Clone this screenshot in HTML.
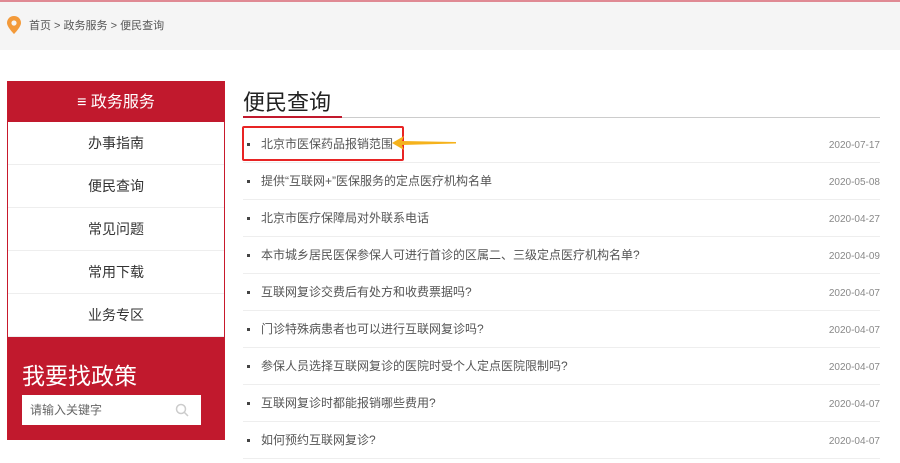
<!DOCTYPE html>
<html><head><meta charset="utf-8"><style>
*{margin:0;padding:0;box-sizing:border-box}
body{width:900px;height:463px;overflow:hidden;background:#fff;font-family:"Liberation Sans","Noto Sans CJK SC",sans-serif;position:relative}
.top{position:absolute;left:0;top:0;width:900px;height:50px;background:#f5f5f5;border-top:2px solid #e08a94}
.crumb{position:absolute;left:29px;top:15px;font-size:11px;color:#555}
.pin{position:absolute;left:7px;top:14px}
.side{position:absolute;left:7px;top:81px;width:218px;height:359px;border:1px solid #c8192c;border-top:none}
.sh{height:41px;background:#c1192d;color:#fff;font-size:16px;text-align:center;line-height:43px}
.mi{height:43px;border-bottom:1px solid #eee;text-align:center;line-height:43px;font-size:14px;color:#333}
.mi:last-of-type{border-bottom:none}
.pol{position:absolute;left:0;top:256px;width:216px;height:103px;background:#c1192d}
.pol h3{position:absolute;left:14px;top:20px;color:#fff;font-size:23px;font-weight:normal}
.pol .in{position:absolute;left:14px;top:58px;width:179px;height:30px;background:#fff;font-size:12px;color:#666;line-height:30px;padding-left:8px}
.title{position:absolute;left:243px;top:85px;font-size:22px;color:#222}
.ul{position:absolute;left:243px;top:117px;width:637px;height:1px;background:#ccc}
.ul2{position:absolute;left:243px;top:116px;width:99px;height:2px;background:#c1192d}
.row{position:absolute;left:243px;width:637px;height:37px;border-bottom:1px solid #eee;font-size:12px;color:#555;line-height:36px}
.row:before{content:"";position:absolute;left:4px;top:17px;width:3px;height:3px;background:#444}
.row span{position:absolute;left:18px}
.row i{position:absolute;right:0;top:2px;line-height:36px;font-style:normal;font-size:10px;color:#888}
.box{position:absolute;left:242px;top:126px;width:162px;height:35px;border:2px solid #e82424;border-radius:2px}
</style></head><body>
<div class="top">
<svg class="pin" width="14" height="18" viewBox="0 0 14 18"><path d="M7 0C3 0 0 3 0 7c0 4 7 11 7 11s7-7 7-11c0-4-3-7-7-7z" fill="#f39a3a"/><circle cx="7" cy="7" r="2.6" fill="#f5f5f5"/></svg>
<div class="crumb">首页 &gt; 政务服务 &gt; 便民查询</div></div>
<div class="side">
<div class="sh">≡ 政务服务</div>
<div class="mi">办事指南</div><div class="mi">便民查询</div><div class="mi">常见问题</div><div class="mi">常用下载</div><div class="mi">业务专区</div>
<div class="pol"><h3>我要找政策</h3><div class="in">请输入关键字
<svg style="position:absolute;right:12px;top:8px" width="14" height="14" viewBox="0 0 14 14"><circle cx="6" cy="6" r="4.5" fill="none" stroke="#ccc" stroke-width="1.5"/><path d="M9.5 9.5L13 13" stroke="#ccc" stroke-width="1.5"/></svg></div></div>
</div>
<div class="title">便民查询</div><div class="ul"></div><div class="ul2"></div>
<div class="row" style="top:126px"><span>北京市医保药品报销范围</span><i>2020-07-17</i></div>
<div class="row" style="top:163px"><span>提供“互联网+”医保服务的定点医疗机构名单</span><i>2020-05-08</i></div>
<div class="row" style="top:200px"><span>北京市医疗保障局对外联系电话</span><i>2020-04-27</i></div>
<div class="row" style="top:237px"><span>本市城乡居民医保参保人可进行首诊的区属二、三级定点医疗机构名单?</span><i>2020-04-09</i></div>
<div class="row" style="top:274px"><span>互联网复诊交费后有处方和收费票据吗?</span><i>2020-04-07</i></div>
<div class="row" style="top:311px"><span>门诊特殊病患者也可以进行互联网复诊吗?</span><i>2020-04-07</i></div>
<div class="row" style="top:348px"><span>参保人员选择互联网复诊的医院时受个人定点医院限制吗?</span><i>2020-04-07</i></div>
<div class="row" style="top:385px"><span>互联网复诊时都能报销哪些费用?</span><i>2020-04-07</i></div>
<div class="row" style="top:422px"><span>如何预约互联网复诊?</span><i>2020-04-07</i></div>
<div class="box"></div>
<svg style="position:absolute;left:390px;top:135px" width="68" height="16" viewBox="0 0 68 16"><path d="M2 8L14 1L12 6L66 7L66 8.5L12 10L14 15Z" fill="#f5b21c"/></svg>
</body></html>
